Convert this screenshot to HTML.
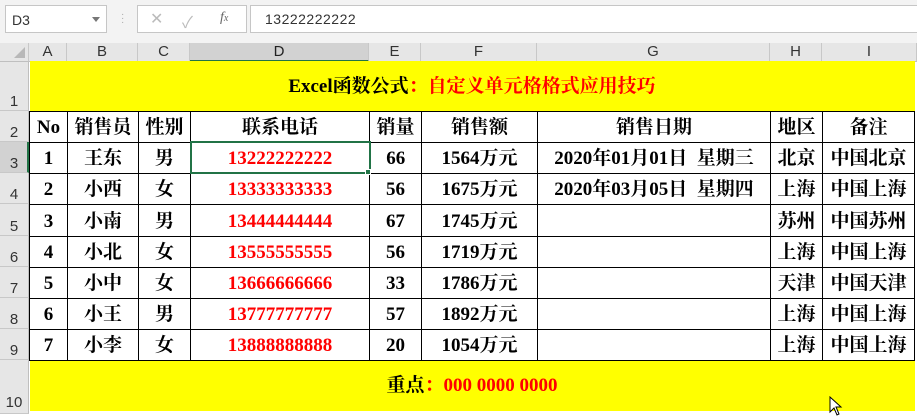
<!DOCTYPE html>
<html><head><meta charset="utf-8"><style>
*{margin:0;padding:0;box-sizing:border-box}
body{width:917px;height:414px;overflow:hidden;background:#fff;font-family:"Liberation Sans","Noto Sans CJK SC",sans-serif;position:relative}
.top{position:absolute;left:0;top:0;width:917px;height:43px;background:#f3f3f3}
.box{position:absolute;background:#fff;border:1px solid #c6c6c6}
.hdr{position:absolute;top:43px;height:19px;background:#e6e6e6;border-right:1px solid #c8c8c8;border-bottom:1px solid #bfbfbf;font-size:15px;color:#333;text-align:center;line-height:18px}
.rh{position:absolute;left:0;width:29px;background:#e6e6e6;border-bottom:1px solid #c8c8c8;border-right:1px solid #bfbfbf;font-size:15px;color:#333;text-align:center}
.rh span{position:absolute;bottom:0;left:0;width:28px}
table{position:absolute;left:29px;top:61px;border-collapse:collapse;table-layout:fixed;font-family:"Liberation Serif","Noto Serif CJK SC",serif;font-weight:bold;font-size:19px;color:#000}
td{border:1px solid #000;text-align:center;padding:3px 0 0 0;white-space:nowrap;overflow:hidden;line-height:22px}
td.r{color:#f00}
tr.y td{background:#ff0;border:none;border-bottom:1px solid #000}
tr.y2 td{background:#ff0;border:none;border-top:1px solid #000}
</style></head><body>
<div class="top"></div>
<div class="box" style="left:5px;top:5px;width:102px;height:28px;font-size:14px;color:#333;padding:6px 0 0 6px">D3<span style="position:absolute;right:6px;top:11px;border:4px solid transparent;border-top:5px solid #777"></span></div>
<div style="position:absolute;left:121px;top:13px;color:#aaa;font-size:10px;line-height:4px">·<br>·<br>·</div>
<div class="box" style="left:137px;top:5px;width:110px;height:28px;color:#bbb;font-size:16px">
<span style="position:absolute;left:12px;top:3px">✕</span><span style="position:absolute;left:44px;top:3px">✓</span><span style="position:absolute;left:82px;top:4px;color:#666;font-family:'Liberation Serif',serif;font-style:italic;font-size:14px">f<small style="font-size:10px">x</small></span></div>
<div class="box" style="left:250px;top:5px;width:670px;height:28px;font-size:14px;color:#333;padding:5px 0 0 14px;letter-spacing:.5px">13222222222</div>
<div class="hdr" style="left:0;width:29px"><span style="position:absolute;right:3px;bottom:3px;border-left:11px solid transparent;border-bottom:11px solid #b8b8b8"></span></div>
<div class="hdr" style="left:29px;width:38px">A</div>
<div class="hdr" style="left:67px;width:71px">B</div>
<div class="hdr" style="left:138px;width:52px">C</div>
<div class="hdr" style="left:190px;width:179px;background:#d2d2d2;border-bottom:2px solid #217346;color:#222">D</div>
<div class="hdr" style="left:369px;width:52px">E</div>
<div class="hdr" style="left:421px;width:116px">F</div>
<div class="hdr" style="left:537px;width:233px">G</div>
<div class="hdr" style="left:770px;width:52px">H</div>
<div class="hdr" style="left:822px;width:95px">I</div>
<div class="rh" style="top:62px;height:49px"><span>1</span></div>
<div class="rh" style="top:111px;height:31px"><span>2</span></div>
<div class="rh" style="top:142px;height:31px;background:#d2d2d2;border-right:2px solid #217346"><span>3</span></div>
<div class="rh" style="top:173px;height:31px"><span>4</span></div>
<div class="rh" style="top:204px;height:32px"><span>5</span></div>
<div class="rh" style="top:236px;height:31px"><span>6</span></div>
<div class="rh" style="top:267px;height:31px"><span>7</span></div>
<div class="rh" style="top:298px;height:31px"><span>8</span></div>
<div class="rh" style="top:329px;height:31px"><span>9</span></div>
<div class="rh" style="top:360px;height:54px"><span style="bottom:2px">10</span></div>
<table>
<colgroup><col style="width:38px"><col style="width:71px"><col style="width:52px"><col style="width:179px"><col style="width:52px"><col style="width:116px"><col style="width:233px"><col style="width:52px"><col style="width:92px"></colgroup>
<tr class="y" style="height:50px"><td colspan="9" style="padding-top:2px">Excel函数公式<span style="color:#f00">：自定义单元格格式应用技巧</span></td></tr>
<tr style="height:31px"><td>No</td><td>销售员</td><td>性别</td><td>联系电话</td><td>销量</td><td>销售额</td><td>销售日期</td><td>地区</td><td>备注</td></tr>
<tr style="height:31px"><td>1</td><td>王东</td><td>男</td><td class="r" style="border:2px solid #217346">13222222222</td><td>66</td><td>1564万元</td><td>2020年01月01日&nbsp;&nbsp;星期三</td><td>北京</td><td>中国北京</td></tr>
<tr style="height:31px"><td>2</td><td>小西</td><td>女</td><td class="r">13333333333</td><td>56</td><td>1675万元</td><td>2020年03月05日&nbsp;&nbsp;星期四</td><td>上海</td><td>中国上海</td></tr>
<tr style="height:32px"><td>3</td><td>小南</td><td>男</td><td class="r">13444444444</td><td>67</td><td>1745万元</td><td></td><td>苏州</td><td>中国苏州</td></tr>
<tr style="height:31px"><td>4</td><td>小北</td><td>女</td><td class="r">13555555555</td><td>56</td><td>1719万元</td><td></td><td>上海</td><td>中国上海</td></tr>
<tr style="height:31px"><td>5</td><td>小中</td><td>女</td><td class="r">13666666666</td><td>33</td><td>1786万元</td><td></td><td>天津</td><td>中国天津</td></tr>
<tr style="height:31px"><td>6</td><td>小王</td><td>男</td><td class="r">13777777777</td><td>57</td><td>1892万元</td><td></td><td>上海</td><td>中国上海</td></tr>
<tr style="height:31px"><td>7</td><td>小李</td><td>女</td><td class="r">13888888888</td><td>20</td><td>1054万元</td><td></td><td>上海</td><td>中国上海</td></tr>
<tr class="y2" style="height:51px"><td colspan="9" style="padding-bottom:2px">重点<span style="color:#f00">：000 0000 0000</span></td></tr>
</table>
<div style="position:absolute;left:365px;top:169px;width:6px;height:6px;background:#217346;border:1px solid #fff"></div>
<svg style="position:absolute;left:829px;top:396px" width="14" height="20"><path d="M1 1 L1 16 L5 12 L8 19 L10 18 L7 11 L12 11 Z" fill="#fff" stroke="#000" stroke-width="1"/></svg>
</body></html>
